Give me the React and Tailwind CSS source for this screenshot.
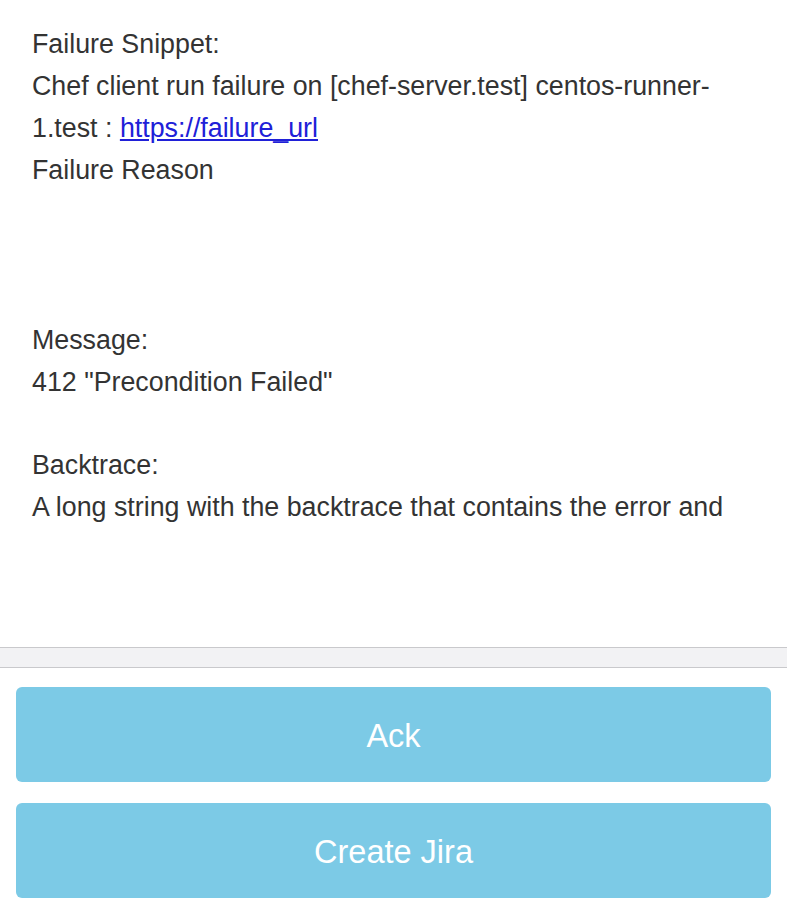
export default function App() {
  return (
    <div className="min-h-screen bg-white font-['Liberation_Sans',Arial,sans-serif]">
      {/* Details */}
      <div className="h-[647px] px-8 pt-[23px] text-[26.8px] leading-[42px] text-[#333]">
        <p>Failure Snippet:</p>
        <p>
          Chef client run failure on [chef-server.test] centos-runner-1.test :{" "}
          <a href="#" className="text-[#2020d8] underline">
            https://failure_url
          </a>
        </p>
        <p>Failure Reason</p>
        <p className="mt-[128px]">Message:</p>
        <p>412 "Precondition Failed"</p>
        <p className="mt-[41px]">Backtrace:</p>
        <p>A long string with the backtrace that contains the error and</p>
      </div>

      {/* Separator */}
      <div className="h-[21px] border-y border-[#c9c9cc] bg-[#f2f2f4]" />

      {/* Actions */}
      <div className="flex flex-col gap-[21px] px-4 pt-[19px] pb-[7px]">
        <button className="h-[95px] rounded-[6px] bg-[#7ccae6] pt-[3px] text-[32.5px] text-white">
          Ack
        </button>
        <button className="h-[95px] rounded-[6px] bg-[#7ccae6] pt-[3px] text-[32.5px] text-white">
          Create Jira
        </button>
      </div>
    </div>
  );
}
